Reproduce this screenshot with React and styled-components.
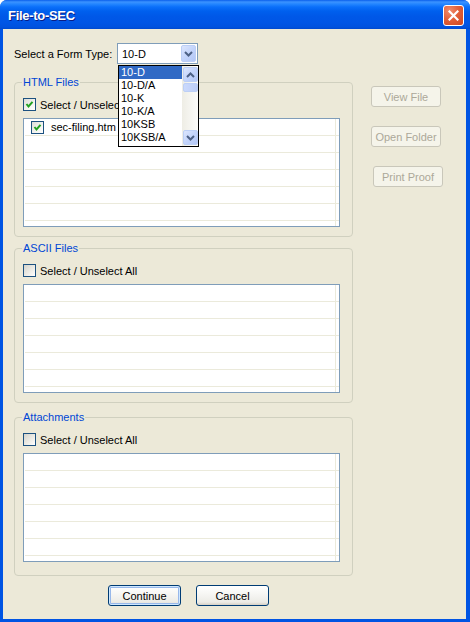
import React from "react";
import styled, { createGlobalStyle } from "styled-components";

const GlobalStyle = createGlobalStyle`
  html, body {
    margin: 0;
    padding: 0;
    background: #ffffff;
  }
  body {
    font-family: "Liberation Sans", Arial, sans-serif;
    font-size: 11px;
    color: #000000;
  }
`;

const Window = styled.div`
  width: 470px;
  height: 622px;
  display: flex;
  flex-direction: column;
  box-sizing: border-box;
  background: #0054e3;
  border-radius: 7px 7px 0 0;
  overflow: hidden;
`;

const TitleBar = styled.div`
  height: 29px;
  flex: 0 0 29px;
  display: flex;
  align-items: center;
  justify-content: space-between;
  padding: 0 6px 0 8px;
  box-sizing: border-box;
  background: linear-gradient(
    to bottom,
    #0a5fec 0px,
    #3b93ff 2px,
    #2486ff 4px,
    #0a6ffa 7px,
    #0060ee 11px,
    #0058e8 16px,
    #0055e5 23px,
    #0052df 27px,
    #0049cf 29px
  );
`;

const Title = styled.span`
  font-family: "Liberation Sans", Arial, sans-serif;
  font-weight: bold;
  font-size: 13px;
  color: #ffffff;
  letter-spacing: -0.3px;
  text-shadow: 1px 1px 0 #0a1d85;
  margin-top: 1px;
`;

const CloseButton = styled.div`
  width: 21px;
  height: 21px;
  box-sizing: border-box;
  border: 1px solid #ffffff;
  border-radius: 3px;
  display: flex;
  align-items: center;
  justify-content: center;
  background: radial-gradient(
    circle at 30% 25%,
    #f08c6c 0%,
    #e2603a 45%,
    #cc4720 100%
  );
  margin-top: 1px;
`;

const Client = styled.div`
  flex: 1;
  margin: 0 4px 3px 3px;
  background: #ece9d8;
  display: flex;
  padding: 14px 0 0 11px;
  box-sizing: border-box;
`;

const LeftColumn = styled.div`
  width: 339px;
  display: flex;
  flex-direction: column;
`;

const RightColumn = styled.div`
  display: flex;
  flex-direction: column;
  align-items: flex-start;
  gap: 19px;
  margin-left: 18px;
  padding-top: 43px;
`;

const FormRow = styled.div`
  height: 21px;
  display: flex;
  align-items: center;
  position: relative;
  z-index: 2;
`;

const Label = styled.span`
  width: 103px;
`;

const ComboBox = styled.div`
  position: relative;
  width: 81px;
  height: 21px;
  box-sizing: border-box;
  border: 1px solid #7f9db9;
  background: #ffffff;
  display: flex;
  align-items: center;
  justify-content: space-between;
  padding: 0 1px 0 4px;
`;

const ArrowButton = styled.div`
  width: ${(p) => p.$w || 15}px;
  height: ${(p) => p.$h || 17}px;
  box-sizing: border-box;
  border: 1px solid #bccff6;
  border-radius: 2px;
  background: linear-gradient(135deg, #dce6fd 0%, #c3d4fb 50%, #b3c7f6 100%);
  display: flex;
  align-items: center;
  justify-content: center;
`;

const DropList = styled.div`
  position: absolute;
  left: 0;
  top: 21px;
  width: 81px;
  height: 82px;
  box-sizing: border-box;
  border: 1px solid #000000;
  background: #ffffff;
  display: flex;
`;

const Options = styled.div`
  flex: 1;
  display: flex;
  flex-direction: column;
`;

const Option = styled.div`
  height: 13px;
  line-height: 13px;
  padding-left: 2px;
  background: ${(p) => (p.$selected ? "#316ac5" : "transparent")};
  color: ${(p) => (p.$selected ? "#ffffff" : "#000000")};
`;

const ScrollBar = styled.div`
  width: 16px;
  display: flex;
  flex-direction: column;
  align-items: center;
  background: linear-gradient(to right, #eeede5, #fcfcfa);
  padding: 1px 0;
  box-sizing: border-box;
`;

const Thumb = styled.div`
  width: 15px;
  height: 9px;
  box-sizing: border-box;
  border: 1px solid #bccff6;
  border-radius: 2px;
  background: linear-gradient(to right, #cad9fc, #bccdf8);
  margin-top: 1px;
`;

const Spacer = styled.div`
  flex: 1;
`;

const Group = styled.fieldset`
  margin: ${(p) => p.$top || 0}px 0 0 0;
  padding: 9px 12px ${(p) => p.$bottom || 9}px 8px;
  border: 1px solid #d0d0bf;
  border-radius: 4px;
  box-sizing: border-box;
  width: 339px;
  min-width: 0;
`;

const Legend = styled.legend`
  color: #0046d5;
  padding: 0 1px;
  margin-left: -1px;
  line-height: 13px;
  font-size: 11px;
`;

const CheckRow = styled.div`
  display: flex;
  align-items: center;
  height: 13px;
  gap: 4px;
  margin-left: ${(p) => p.$indent || 0}px;
`;

const Box = styled.span`
  width: 13px;
  height: 13px;
  flex: 0 0 13px;
  box-sizing: border-box;
  border: 1px solid #1c5180;
  background: ${(p) =>
    p.$checked
      ? "linear-gradient(135deg, #dcdcd7 0%, #f4f4f0 60%, #ffffff 100%)"
      : "linear-gradient(135deg, #d5d4cc 0%, #ecebe5 55%, #ffffff 100%)"};
  display: flex;
  align-items: center;
  justify-content: center;
`;

const ListView = styled.div`
  margin-top: 7px;
  width: 317px;
  height: 109px;
  box-sizing: border-box;
  border: 1px solid #7f9db9;
  background: #ffffff;
  padding-left: 1px;
  overflow: hidden;
`;

const Row = styled.div`
  display: flex;
  height: 17px;
  box-sizing: border-box;
  border-bottom: 1px solid #ebeadb;
`;

const Cell = styled.div`
  width: 311px;
  box-sizing: border-box;
  border-right: 1px solid #ebeadb;
  display: flex;
  align-items: center;
`;

const ItemText = styled.span`
  margin-left: 3px;
`;

const Button = styled.button`
  width: ${(p) => p.$w || 73}px;
  height: 21px;
  box-sizing: border-box;
  font-family: "Liberation Sans", Arial, sans-serif;
  font-size: 11px;
  padding: 0;
  border-radius: 3px;
  margin-left: ${(p) => p.$shift || 0}px;
  border: 1px solid ${(p) => (p.disabled ? "#c9c7ba" : "#003c74")};
  color: ${(p) => (p.disabled ? "#aca899" : "#000000")};
  background: ${(p) =>
    p.disabled
      ? "#f5f4ea"
      : "linear-gradient(to bottom, #ffffff 0%, #f7f7f4 40%, #ecebe6 85%, #d6d0c5 100%)"};
  box-shadow: ${(p) =>
    p.$default
      ? "inset 0 0 0 1px #cee7ff, inset 0 0 0 2px #98b8ea"
      : "none"};
`;

const ButtonRow = styled.div`
  display: flex;
  gap: 15px;
  margin: 9px 0 0 94px;
`;

const Check = () => (
  <svg width="9" height="9" viewBox="0 0 9 9">
    <polyline
      points="1.5,4 3.5,6.5 7.5,1.8"
      fill="none"
      stroke="#21a121"
      strokeWidth="2"
    />
  </svg>
);

const Chevron = ({ up }) => (
  <svg width="9" height="6" viewBox="0 0 9 6">
    <polyline
      points={up ? "1,5 4.5,1.5 8,5" : "1,1 4.5,4.5 8,1"}
      fill="none"
      stroke="#4d6185"
      strokeWidth="2"
    />
  </svg>
);

const options = ["10-D", "10-D/A", "10-K", "10-K/A", "10KSB", "10KSB/A"];

const FileList = ({ items = [] }) => {
  const rows = [];
  for (let i = 0; i < 7; i++) {
    const item = items[i];
    rows.push(
      <Row key={i}>
        <Cell>
          {item && (
            <CheckRow $indent={6}>
              <Box $checked>
                <Check />
              </Box>
              <ItemText>{item}</ItemText>
            </CheckRow>
          )}
        </Cell>
      </Row>
    );
  }
  return <ListView>{rows}</ListView>;
};

const SelectAll = ({ checked }) => (
  <CheckRow>
    <Box $checked={checked}>{checked && <Check />}</Box>
    <span>Select / Unselect All</span>
  </CheckRow>
);

const App = () => {
  return (
    <>
      <GlobalStyle />
      <Window>
        <TitleBar>
          <Title>File-to-SEC</Title>
          <CloseButton>
            <svg width="11" height="11" viewBox="0 0 11 11">
              <path
                d="M1.5 1.5 L9.5 9.5 M9.5 1.5 L1.5 9.5"
                stroke="#ffffff"
                strokeWidth="2.2"
                strokeLinecap="square"
              />
            </svg>
          </CloseButton>
        </TitleBar>
        <Client>
          <LeftColumn>
            <FormRow>
              <Label>Select a Form Type:</Label>
              <ComboBox>
                <span>10-D</span>
                <ArrowButton>
                  <Chevron />
                </ArrowButton>
                <DropList>
                  <Options>
                    {options.map((o, i) => (
                      <Option key={o} $selected={i === 0}>
                        {o}
                      </Option>
                    ))}
                  </Options>
                  <ScrollBar>
                    <ArrowButton $w={15} $h={15}>
                      <Chevron up />
                    </ArrowButton>
                    <Thumb />
                    <Spacer />
                    <ArrowButton $w={15} $h={15}>
                      <Chevron />
                    </ArrowButton>
                  </ScrollBar>
                </DropList>
              </ComboBox>
            </FormRow>

            <Group $top={12}>
              <Legend>HTML Files</Legend>
              <SelectAll checked />
              <FileList items={["sec-filing.htm"]} />
            </Group>

            <Group $top={5}>
              <Legend>ASCII Files</Legend>
              <SelectAll />
              <FileList />
            </Group>

            <Group $top={8} $bottom={13}>
              <Legend>Attachments</Legend>
              <SelectAll />
              <FileList />
            </Group>

            <ButtonRow>
              <Button $default>Continue</Button>
              <Button>Cancel</Button>
            </ButtonRow>
          </LeftColumn>

          <RightColumn>
            <Button disabled $w={70}>
              View File
            </Button>
            <Button disabled $w={70}>
              Open Folder
            </Button>
            <Button disabled $w={70} $shift={2}>
              Print Proof
            </Button>
          </RightColumn>
        </Client>
      </Window>
    </>
  );
};

export default App;
